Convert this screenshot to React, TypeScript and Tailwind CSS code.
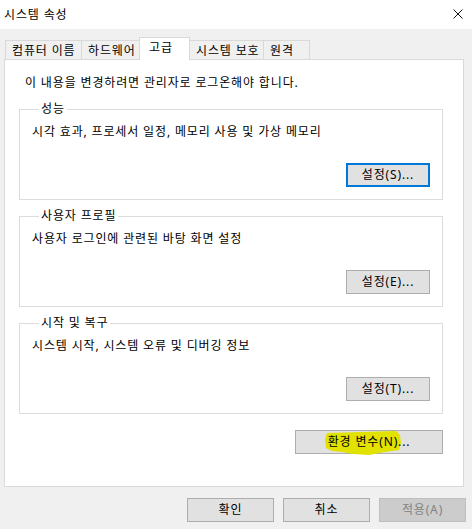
import React from "react";

const tabs = [
  { label: "컴퓨터 이름", w: "w-[76px]" },
  { label: "하드웨어", w: "w-[59px]" },
  { label: "고급", w: "w-[51px]", active: true },
  { label: "시스템 보호", w: "w-[74px]" },
  { label: "원격", w: "w-[47px]" },
];

function Btn({ children, className = "" }: { children: React.ReactNode; className?: string }) {
  return (
    <button className={`h-[24px] bg-[#e1e1e1] border border-[#adadad] text-[12px] leading-[16px] text-black ${className}`}>
      {children}
    </button>
  );
}

function Group({ title, desc, btn, focused }: { title: string; desc: string; btn: string; focused?: boolean }) {
  return (
    <fieldset className="ml-[14px] w-[424px] border border-[#dcdcdc] px-[12px] pb-[12px]">
      <legend className="ml-[7px] px-[2px] leading-[16px]">{title}</legend>
      <div className="mt-[7px] leading-[16px]">{desc}</div>
      <div className="mt-[23px] flex justify-end">
        {focused ? (
          <button className="h-[24px] w-[84px] bg-[#e1e1e1] border-2 border-[#0078d7] text-[12px] leading-[16px]">
            {btn}
          </button>
        ) : (
          <Btn className="w-[84px]">{btn}</Btn>
        )}
      </div>
    </fieldset>
  );
}

export default function App() {
  return (
    <div className="w-[472px] h-[529px] bg-[#f0f0f0] text-[12px] tracking-[0.85px] text-black font-['Noto_Sans','Noto_Sans_CJK_KR',sans-serif] overflow-hidden">
      <div className="h-[29px] bg-white flex items-center justify-between pl-[4px] pr-[9px]">
        <span className="leading-[16px]">시스템 속성</span>
        <svg width="10" height="10" viewBox="0 0 10 10" className="mb-[1px]">
          <path d="M0.5 0.5L9.5 9.5M9.5 0.5L0.5 9.5" stroke="#111" strokeWidth="1" />
        </svg>
      </div>

      <div className="pt-[8px]">
        <div className="flex items-end pl-[5px] relative z-10">
          {tabs.map((t) =>
            t.active ? (
              <div
                key={t.label}
                className={`${t.w} h-[23px] -mx-[1px] -mb-[1px] bg-white border border-b-0 border-[#d9d9d9] pl-[9px] pt-[2px] leading-[16px]`}
              >
                {t.label}
              </div>
            ) : (
              <div
                key={t.label}
                className={`${t.w} h-[19px] bg-[#f0f0f0] border border-b-0 border-r-0 last:border-r border-[#d9d9d9] pl-[6px] pt-[2px] leading-[16px] whitespace-nowrap`}
              >
                {t.label}
              </div>
            )
          )}
        </div>

        <div className="ml-[4px] w-[460px] h-[428px] bg-white border border-[#d9d9d9]">
          <div className="pl-[20px] pt-[15px] leading-[16px]">이 내용을 변경하려면 관리자로 로그온해야 합니다.</div>

          <div className="mt-[10px] flex flex-col gap-[8px]">
            <Group title="성능" desc="시각 효과, 프로세서 일정, 메모리 사용 및 가상 메모리" btn="설정(S)..." focused />
            <Group title="사용자 프로필" desc="사용자 로그인에 관련된 바탕 화면 설정" btn="설정(E)..." />
            <Group title="시작 및 복구" desc="시스템 시작, 시스템 오류 및 디버깅 정보" btn="설정(T)..." />
          </div>

          <div className="mt-[16px] ml-[290px] w-[148px]">
            <Btn className="w-[148px] flex items-center justify-center">
              <span className="relative inline-block">
                <svg className="absolute -left-[4px] -top-[3px]" width="80" height="25" viewBox="0 0 80 25">
                  <path
                    d="M3 2 L72 0 L76 4 L77 12 L75 19 L61 21 L45 24 L29 23 L18 21 L8 20 L2 17 L1 8 Z"
                    fill="#e2e200"
                  />
                </svg>
                <span className="relative">환경 변수(N)</span>
              </span>
              <span className="relative">...</span>
            </Btn>
          </div>
        </div>

        <div className="flex justify-end gap-[9px] pr-[6px] mt-[11px]">
          <Btn className="w-[87px]">확인</Btn>
          <Btn className="w-[87px]">취소</Btn>
          <button className="h-[24px] w-[87px] bg-[#cccccc] border border-[#bfbfbf] text-[#838383] text-[12px] leading-[16px]">
            적용(A)
          </button>
        </div>
      </div>
    </div>
  );
}
